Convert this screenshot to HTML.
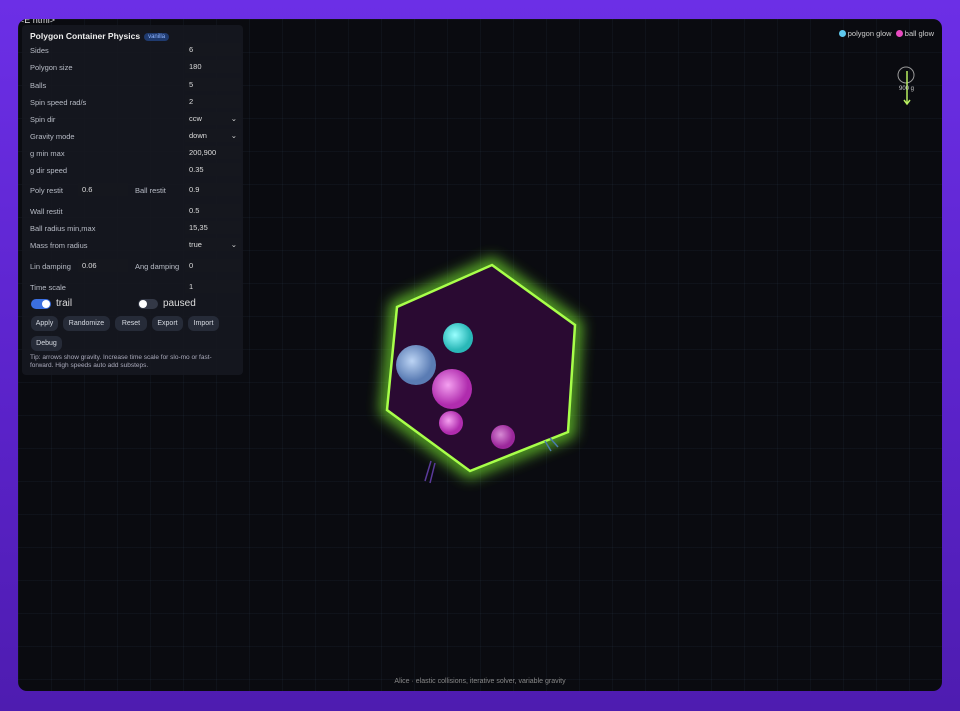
<!DOCTYPE html>
<html><head><style>
*{margin:0;padding:0;box-sizing:border-box}
body{width:960px;height:711px;overflow:hidden;background:linear-gradient(180deg,#6c2fe6,#5a22c8 60%,#4e1cb0);font-family:"Liberation Sans",sans-serif;position:relative}
#win{position:absolute;left:18px;top:19px;width:924px;height:672px;border-radius:9px;overflow:hidden;
background-image:linear-gradient(rgba(80,110,140,.08) 1px,transparent 1px),linear-gradient(90deg,rgba(80,110,140,.08) 1px,transparent 1px);background-size:33px 33px;background-color:#0a0b10}
.t{position:absolute;left:1px;top:-4px;color:#ddd;font-size:9px}
#panel{position:absolute;left:4px;top:6px;width:221px;height:350px;background:rgba(22,24,32,.92);border-radius:4px;color:#b8bcc6;font-size:7.5px}
.h{position:absolute;left:8px;top:6px;font-size:8.5px;font-weight:bold;color:#eee}
.tag{display:inline-block;background:#1f3a6e;color:#8fb4ff;font-size:6px;padding:1px 4px;border-radius:5px;margin-left:4px;vertical-align:1px;font-weight:normal}
.r{position:absolute;left:8px}
.v{position:absolute;left:163px;width:56px;height:13px;background:#15171e;color:#ddd;padding:2px 4px}
.btn{position:absolute;height:15px;background:#262b38;border-radius:6px;color:#d6dae2;font-size:7px;text-align:center;line-height:15px}
.sw{position:absolute;width:20px;height:10px;border-radius:5px}
.sw i{position:absolute;top:1px;width:8px;height:8px;border-radius:50%;background:#fff}
</style></head><body>
<div id="win">
<div class="t">&lt;E html&gt;</div>
<div id="panel">
<div class="h">Polygon Container Physics<span class="tag">vanilla</span></div>
<div class="r" style="top:21px">Sides</div><div class="v" style="top:18px">6</div>
<div class="r" style="top:38px">Polygon size</div><div class="v" style="top:35px">180</div>
<div class="r" style="top:56px">Balls</div><div class="v" style="top:53px">5</div>
<div class="r" style="top:73px">Spin speed rad/s</div><div class="v" style="top:70px">2</div>
<div class="r" style="top:90px">Spin dir</div><div class="v" style="top:87px">ccw<span style="float:right">⌄</span></div>
<div class="r" style="top:107px">Gravity mode</div><div class="v" style="top:104px">down<span style="float:right">⌄</span></div>
<div class="r" style="top:124px">g min max</div><div class="v" style="top:121px">200,900</div>
<div class="r" style="top:141px">g dir speed</div><div class="v" style="top:138px">0.35</div>
<div class="r" style="top:161px">Poly restit</div><div class="v" style="top:158px;left:56px;width:50px">0.6</div>
<div class="r" style="top:161px;left:113px">Ball restit</div><div class="v" style="top:158px">0.9</div>
<div class="r" style="top:182px">Wall restit</div><div class="v" style="top:179px">0.5</div>
<div class="r" style="top:199px">Ball radius min,max</div><div class="v" style="top:196px">15,35</div>
<div class="r" style="top:216px">Mass from radius</div><div class="v" style="top:213px">true<span style="float:right">⌄</span></div>
<div class="r" style="top:237px">Lin damping</div><div class="v" style="top:234px;left:56px;width:50px">0.06</div>
<div class="r" style="top:237px;left:113px">Ang damping</div><div class="v" style="top:234px">0</div>
<div class="r" style="top:258px">Time scale</div><div class="v" style="top:255px">1</div>
<div class="sw" style="left:9px;top:274px;background:#3b6fe0"><i style="left:11px"></i></div>
<div class="r" style="left:34px;top:273px;font-size:10px;color:#ddd">trail</div>
<div class="sw" style="left:116px;top:274px;background:#333846"><i style="left:1px"></i></div>
<div class="r" style="left:141px;top:273px;font-size:10px;color:#ddd">paused</div>
<div class="btn" style="left:9px;top:291px;width:27px">Apply</div>
<div class="btn" style="left:41px;top:291px;width:47px">Randomize</div>
<div class="btn" style="left:93px;top:291px;width:32px">Reset</div>
<div class="btn" style="left:130px;top:291px;width:31px">Export</div>
<div class="btn" style="left:166px;top:291px;width:31px">Import</div>
<div class="btn" style="left:9px;top:311px;width:31px">Debug</div>
<div class="r" style="top:329px;width:205px;line-height:8px;font-size:6.5px;color:#aab">Tip: arrows show gravity. Increase time scale for slo-mo or fast-forward. High speeds auto add substeps.</div>
</div>
<div style="position:absolute;right:8px;top:10px;font-size:7.5px;color:#ccc;white-space:nowrap"><span style="display:inline-block;width:7px;height:7px;border-radius:50%;background:#5ec8ee;vertical-align:-1px"></span> polygon glow &nbsp;<span style="display:inline-block;width:7px;height:7px;border-radius:50%;background:#e84bc0;vertical-align:-1px"></span> ball glow</div>
<svg width="924" height="672" style="position:absolute;left:0;top:0">
<defs>
<filter id="g" x="-30%" y="-30%" width="160%" height="160%"><feGaussianBlur stdDeviation="7"/></filter>
<radialGradient id="c1" cx="40%" cy="40%"><stop offset="0" stop-color="#9ff"/><stop offset="1" stop-color="#2ab8b8"/></radialGradient>
<radialGradient id="c2" cx="40%" cy="40%"><stop offset="0" stop-color="#bcd4f4"/><stop offset="1" stop-color="#5a7cb4"/></radialGradient>
<radialGradient id="c3" cx="40%" cy="40%"><stop offset="0" stop-color="#f4a0f0"/><stop offset="1" stop-color="#b02cae"/></radialGradient>
</defs>
<circle cx="888" cy="56" r="8" fill="none" stroke="#999" stroke-width="1"/>
<line x1="889" y1="52" x2="889" y2="84" stroke="#b8f060" stroke-width="1.5"/>
<path d="M886 81 L889 85 L892 81" fill="none" stroke="#b8f060" stroke-width="1.5"/>
<text x="881" y="71" font-size="6" fill="#ccc" font-family="Liberation Sans">900 g</text>
<polygon points="474,246 557,306 550,413 452,452 369,391 379,288" fill="none" stroke="#7aee30" stroke-width="14" filter="url(#g)" opacity=".75"/>
<polygon points="474,246 557,306 550,413 452,452 369,391 379,288" fill="#2a0a32" stroke="#a8ff4a" stroke-width="2.5"/>
<circle cx="440" cy="319" r="15" fill="url(#c1)"/>
<circle cx="398" cy="346" r="20" fill="url(#c2)"/>
<circle cx="434" cy="370" r="20" fill="url(#c3)"/>
<circle cx="433" cy="404" r="12" fill="url(#c3)"/>
<circle cx="485" cy="418" r="12" fill="url(#c3)" opacity=".85"/>
<path d="M407 462 L413 442 M412 464 L417 444" stroke="#5a3a9a" stroke-width="1.5"/>
<path d="M527 422 L533 432 M532 419 L540 428" stroke="#4a7aaa" stroke-width="1.5"/>
</svg>
<div style="position:absolute;left:0;width:924px;top:659px;text-align:center;font-size:7px;color:#888">Alice · elastic collisions, iterative solver, variable gravity</div>
</div>
</body></html>
